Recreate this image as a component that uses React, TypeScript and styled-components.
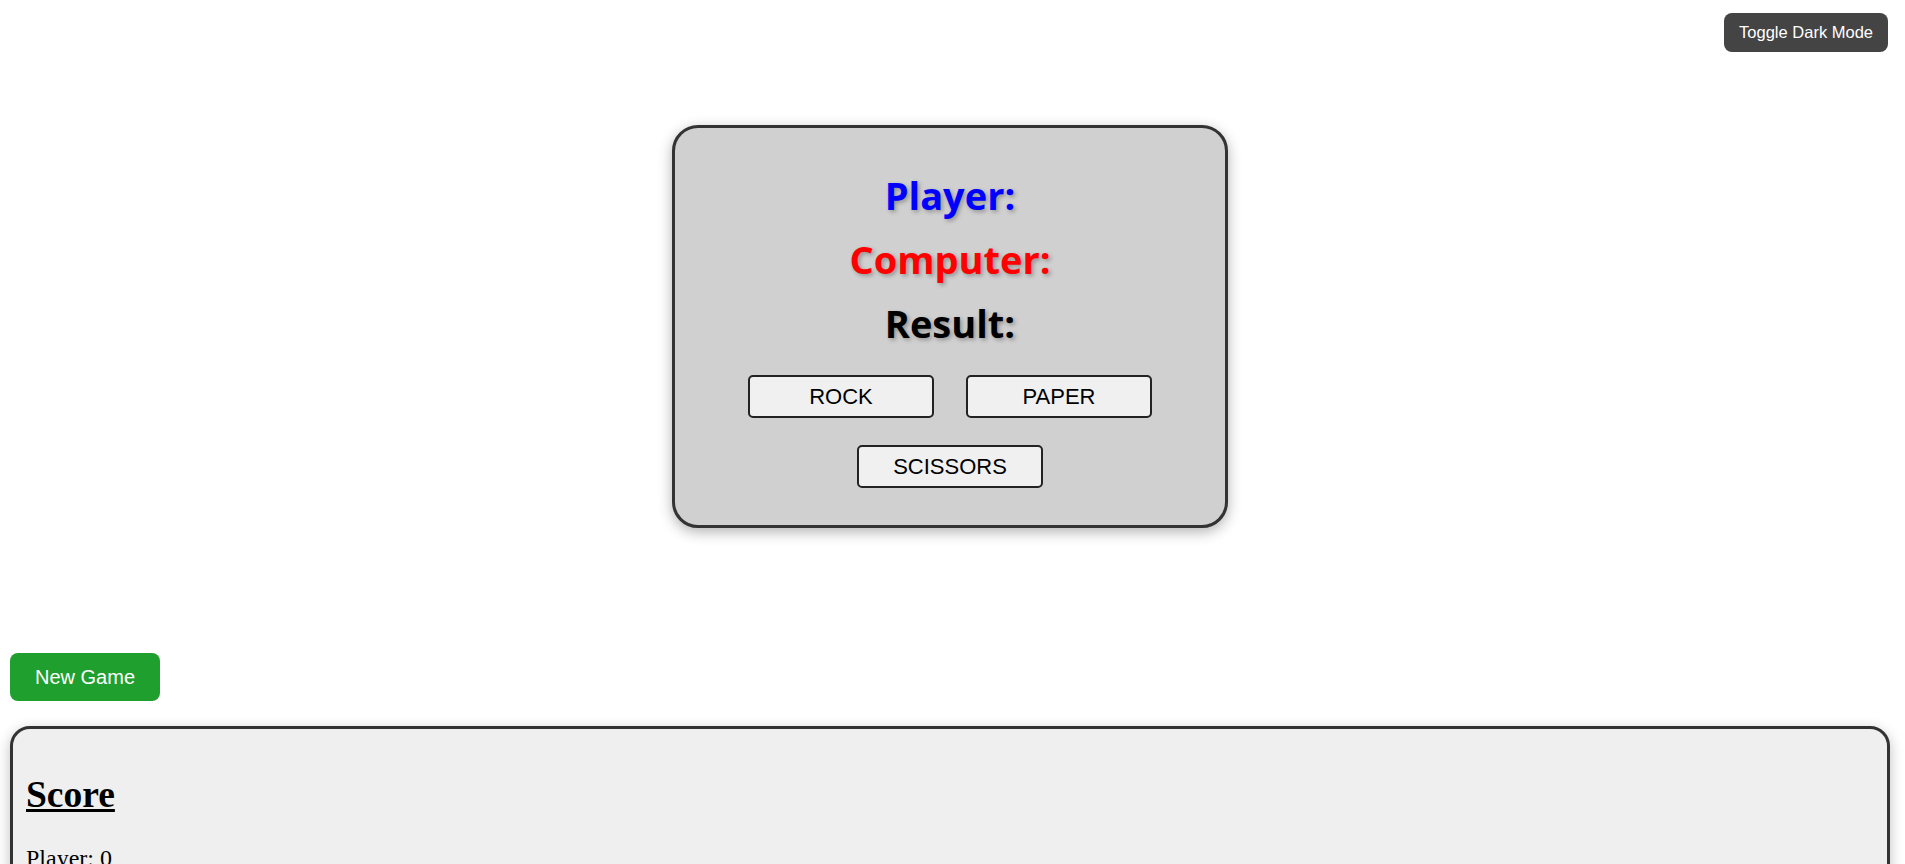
import React from "react";
import styled, { createGlobalStyle } from "styled-components";

const GlobalStyle = createGlobalStyle`
  body {
    margin: 0;
    background: #ffffff;
    font-family: "Liberation Serif", "Times New Roman", serif;
    color: #000;
  }
`;

const Page = styled.div`
  position: relative;
  min-height: 1000px;
  margin-right: 5px;
`;

const ToggleButton = styled.button`
  position: absolute;
  top: 13px;
  right: 12px;
  padding: 10px 15px;
  border: none;
  border-radius: 8px;
  background: #444444;
  color: #ffffff;
  font-family: "Liberation Sans", Arial, sans-serif;
  font-size: 16.5px;
  line-height: 19px;
  cursor: pointer;
`;

const Stage = styled.main`
  display: flex;
  justify-content: center;
  padding-top: 125px;
`;

const GameCard = styled.section`
  box-sizing: border-box;
  width: 556px;
  padding: 35px 20px 37px;
  background: #d0d0d0;
  border: 3px solid #333333;
  border-radius: 26px;
  box-shadow: 0 4px 14px rgba(0, 0, 0, 0.3);
  text-align: center;
`;

const Line = styled.h2<{ $color: string }>`
  margin: 0;
  height: 64px;
  line-height: 64px;
  font-family: "Open Sans", "Noto Sans", sans-serif;
  font-weight: 700;
  font-size: 38px;
  letter-spacing: 0;
  color: ${(p) => p.$color};
  text-shadow: 2px 2px 4px rgba(0, 0, 0, 0.3);
`;

const Choices = styled.div`
  display: flex;
  flex-wrap: wrap;
  justify-content: center;
  column-gap: 32px;
  row-gap: 27px;
  max-width: 440px;
  margin: 20px auto 0;
`;

const ChoiceButton = styled.button`
  box-sizing: border-box;
  width: 186px;
  height: 43px;
  padding: 0;
  background: #f0f0f0;
  border: 2px solid #222222;
  border-radius: 5px;
  color: #000000;
  font-family: "Liberation Sans", Arial, sans-serif;
  font-size: 22px;
  cursor: pointer;
`;

const Controls = styled.div`
  margin-top: 125px;
  padding-left: 10px;
`;

const NewGameButton = styled.button`
  padding: 12px 25px;
  border: none;
  border-radius: 8px;
  background: #1f9f2e;
  color: #ffffff;
  font-family: "Liberation Sans", Arial, sans-serif;
  font-size: 20px;
  line-height: 24px;
  cursor: pointer;
`;

const ScoreBoard = styled.section`
  margin: 25px 10px 10px;
  padding: 15px 13px;
  background: #efefef;
  border: 3px solid #333333;
  border-radius: 20px;
  box-shadow: 0 4px 14px rgba(0, 0, 0, 0.25);
`;

const ScoreTitle = styled.h2`
  margin: 30px 0;
  font-size: 37.5px;
  line-height: 41px;
  font-weight: 700;
  text-decoration: underline;
`;

const ScoreLine = styled.p`
  margin: 24px 0;
  font-size: 24px;
`;

export default function App() {
  return (
    <Page>
      <GlobalStyle />
      <ToggleButton>Toggle Dark Mode</ToggleButton>
      <Stage>
        <GameCard>
          <Line $color="#0000ff">Player:</Line>
          <Line $color="#ff0000">Computer:</Line>
          <Line $color="#000000">Result:</Line>
          <Choices>
            <ChoiceButton>ROCK</ChoiceButton>
            <ChoiceButton>PAPER</ChoiceButton>
            <ChoiceButton>SCISSORS</ChoiceButton>
          </Choices>
        </GameCard>
      </Stage>
      <Controls>
        <NewGameButton>New Game</NewGameButton>
      </Controls>
      <ScoreBoard>
        <ScoreTitle>Score</ScoreTitle>
        <ScoreLine>Player: 0</ScoreLine>
        <ScoreLine>Computer: 0</ScoreLine>
      </ScoreBoard>
    </Page>
  );
}
